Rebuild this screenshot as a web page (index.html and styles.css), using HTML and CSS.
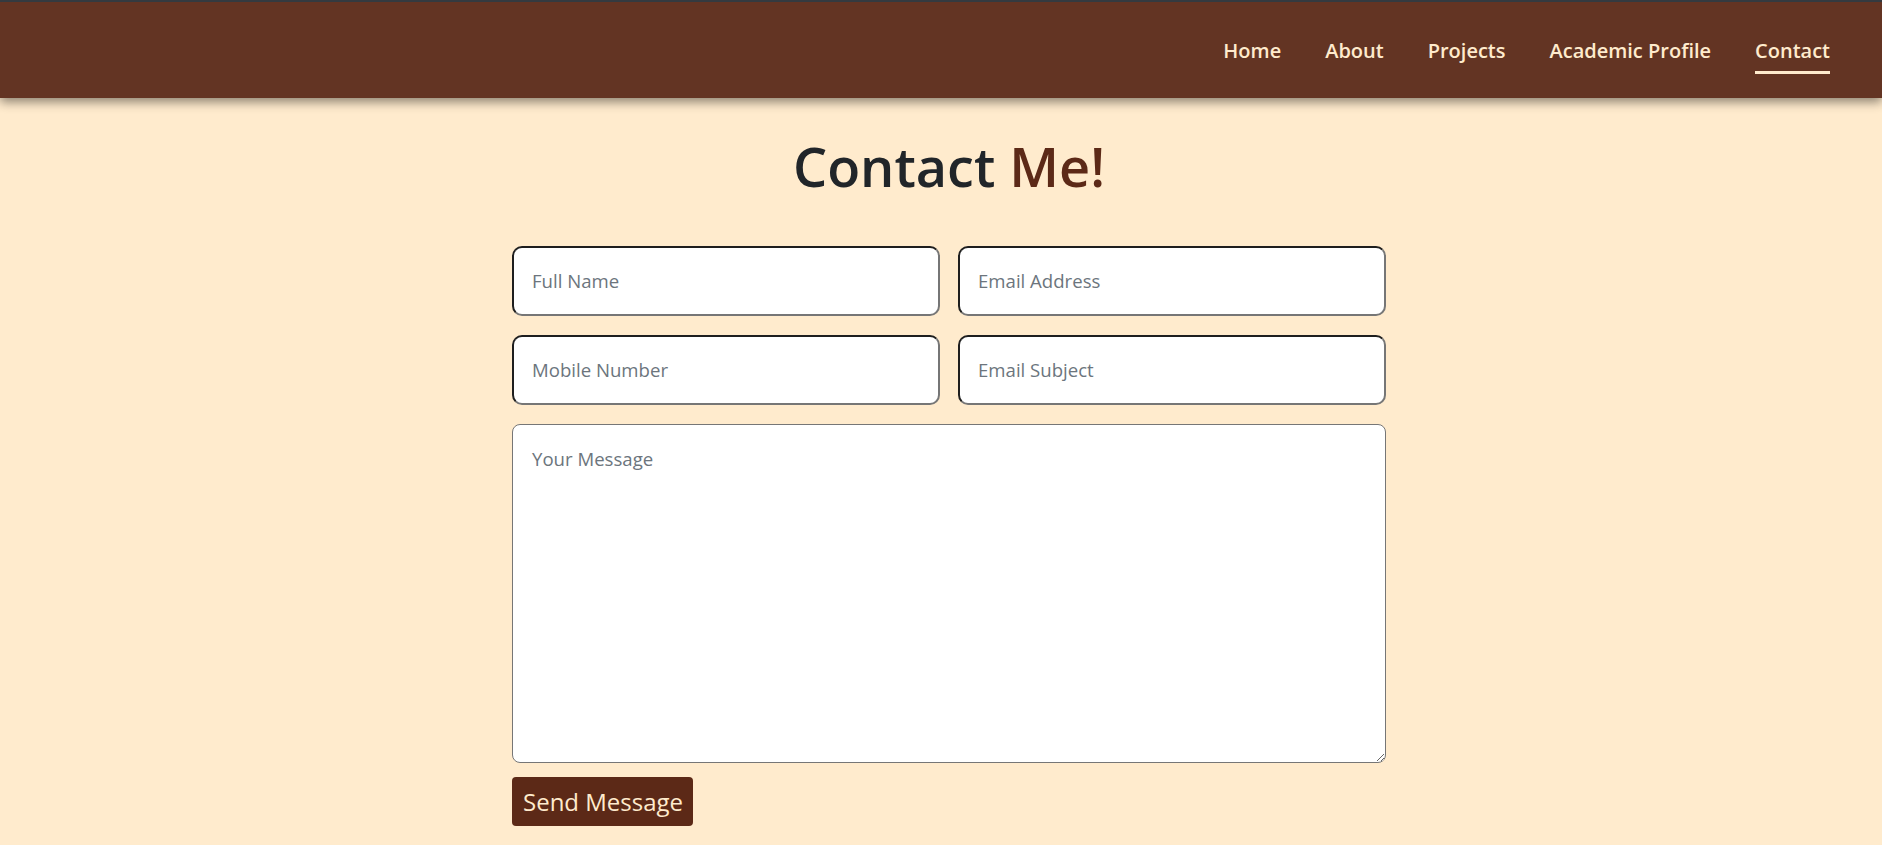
FILE: index.html
```html
<!DOCTYPE html>
<html lang="en">
<head>
<meta charset="utf-8">
<title>Contact</title>
<link rel="stylesheet" href="styles.css">
</head>
<body>
<header class="site-header">
  <nav class="nav">
    <a class="nav-link" href="#">Home</a>
    <a class="nav-link" href="#">About</a>
    <a class="nav-link" href="#">Projects</a>
    <a class="nav-link" href="#">Academic Profile</a>
    <a class="nav-link active" href="#">Contact</a>
  </nav>
</header>
<main class="contact">
  <h1 class="contact-title">Contact <span class="accent">Me!</span></h1>
  <form class="contact-form">
    <div class="row">
      <input class="field" type="text" placeholder="Full Name">
      <input class="field" type="email" placeholder="Email Address">
    </div>
    <div class="row">
      <input class="field" type="tel" placeholder="Mobile Number">
      <input class="field" type="text" placeholder="Email Subject">
    </div>
    <textarea class="message" placeholder="Your Message"></textarea>
    <div class="actions">
      <button class="send" type="button">Send Message</button>
    </div>
  </form>
</main>
</body>
</html>
```
FILE: styles.css
```css
* { box-sizing: border-box; }

html, body {
  margin: 0;
  padding: 0;
}

body {
  background: #ffebcd;
  font-family: "Open Sans", "Noto Sans", sans-serif;
  color: #212529;
  min-height: 845px;
}

.site-header {
  border-top: 2px solid #343a40;
  height: 98px;
  background: #633423;
  box-shadow: 0 4px 10px rgba(0, 0, 0, 0.45);
  display: flex;
  justify-content: flex-end;
  align-items: center;
  padding-right: 52px;
  position: relative;
  z-index: 1;
}

.nav {
  display: flex;
  gap: 44px;
  margin-top: 2px;
}

.nav-link {
  position: relative;
  color: #ffebcd;
  text-decoration: none;
  font-weight: 600;
  font-size: 20px;
  line-height: 30px;
}

.nav-link.active::after {
  content: "";
  position: absolute;
  left: 0;
  right: 0;
  bottom: -8px;
  height: 3px;
  background: #ffebcd;
}

.contact {
  padding-left: 16px;
  display: flex;
  flex-direction: column;
  align-items: center;
}

.contact-title {
  margin: 36px 0 47px;
  font-size: 54px;
  font-weight: 600;
  line-height: 1.2;
  color: #212529;
}

.accent {
  color: #5c2917;
}

.contact-form {
  width: 874px;
  display: flex;
  flex-direction: column;
  gap: 19px;
}

.row {
  display: flex;
  gap: 18px;
}

.field {
  flex: 1;
  height: 70px;
  border: 2px solid;
  border-color: #1e1e1e #767676 #767676 #1e1e1e;
  border-radius: 10px;
  background: #fff;
  padding: 0 18px;
  font-family: "Open Sans", "Noto Sans", sans-serif;
  font-size: 18.6px;
  color: #212529;
}

.message {
  height: 339px;
  border: 1px solid #767676;
  border-radius: 8px;
  background: #fff;
  padding: 20px 19px;
  font-family: "Open Sans", "Noto Sans", sans-serif;
  font-size: 18.6px;
  line-height: 27px;
  color: #212529;
}

.field::placeholder,
.message::placeholder {
  color: #6c757d;
  opacity: 1;
}

.actions {
  margin-top: -5px;
}

.send {
  background: #5c2917;
  color: #ffebcd;
  border: none;
  border-radius: 4px;
  padding: 7px 10px 6px 11px;
  font-family: "Open Sans", "Noto Sans", sans-serif;
  font-size: 24px;
  line-height: 36px;
  cursor: pointer;
}
```
